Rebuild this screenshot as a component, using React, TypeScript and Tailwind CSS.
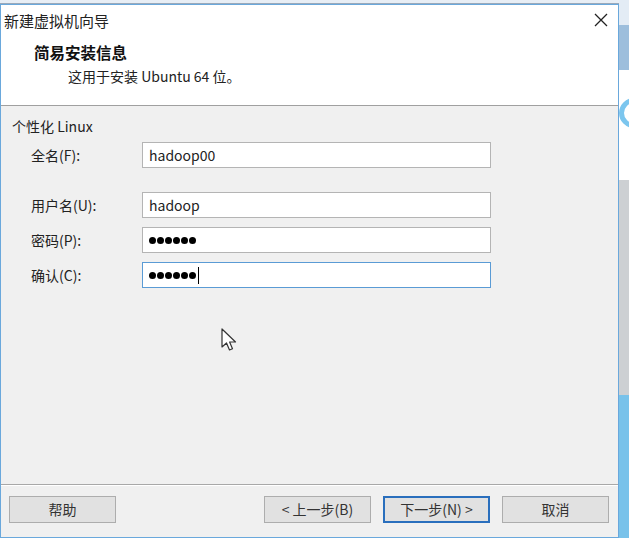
import React from "react";

const font = { fontFamily: '"Noto Sans CJK SC", "Noto Sans", sans-serif' };

function Field({ label, value, focused, password, mt }: { label: string; value: string; focused?: boolean; password?: boolean; mt: string }) {
  return (
    <div className={`flex items-center ${mt}`}>
      <div className="w-[130px] pl-[19px] text-[14px] text-[#222]">{label}</div>
      <div
        className={`w-[349px] h-[26px] bg-white flex items-center pl-[6px] border ${
          focused ? "border-[#5a9bd5]" : "border-[#b4b4b4]"
        }`}
      >
        {password ? (
          <span className="flex items-center gap-[1px]">
            {Array.from({ length: 6 }).map((_, i) => (
              <span key={i} className="w-[7px] h-[7px] rounded-full bg-black inline-block" />
            ))}
            {focused && <span className="w-px h-[17px] bg-black ml-[1px]" />}
          </span>
        ) : (
          <span className="text-[14px] text-[#222]">{value}</span>
        )}
      </div>
    </div>
  );
}

function Btn({ children, primary }: { children: React.ReactNode; primary?: boolean }) {
  return (
    <div
      className={`w-[107px] h-[27px] flex items-center justify-center text-[14px] text-[#333] bg-[#e1e1e1] ${
        primary ? "border-2 border-[#2a6fbd]" : "border border-[#adadad]"
      }`}
    >
      {children}
    </div>
  );
}

export default function App() {
  return (
    <div className="w-[629px] h-[538px] flex overflow-hidden bg-[#dfe9f3]" style={font}>
      <div className="w-[619px] flex flex-col">
        <div className="h-[4px] bg-[#e8eef5] border-b border-[#9aa9ba]" />
        <div className="relative flex-1 flex flex-col border border-[#6aa8dc] bg-white">
          <div className="h-[30px] flex items-center justify-between pl-[3px] pr-[10px]">
            <span className="text-[15px] text-[#222] leading-none">新建虚拟机向导</span>
            <svg width="14" height="14" viewBox="0 0 14 14">
              <path d="M1 1 L13 13 M13 1 L1 13" stroke="#222" strokeWidth="1.3" />
            </svg>
          </div>
          <div className="h-[70px] pt-[6px] pl-[33px]">
            <div className="text-[15.5px] font-bold text-[#111] leading-[22px]">简易安装信息</div>
            <div className="pl-[34px] text-[14px] text-[#222] leading-[22px] mt-[2px]">这用于安装 Ubuntu 64 位。</div>
          </div>
          <div className="h-px bg-[#a0a0a0]" />
          <div className="h-[378px] bg-[#f0f0f0] pt-[10px] pl-[11px] relative">
            <div className="text-[14px] text-[#222] leading-[20px]">个性化 Linux</div>
            <Field label="全名(F):" value="hadoop00" mt="mt-[6px]" />
            <Field label="用户名(U):" value="hadoop" mt="mt-[24px]" />
            <Field label="密码(P):" value="" password mt="mt-[9px]" />
            <Field label="确认(C):" value="" password focused mt="mt-[9px]" />
            <svg className="absolute left-[220px] top-[222px]" width="18" height="26" viewBox="0 0 18 26">
              <path d="M1 1 L1 19 L5.5 15 L8.5 22 L11.5 20.7 L8.6 14 L14.5 14 Z" fill="#fff" stroke="#333" strokeWidth="1.2" strokeLinejoin="round" />
            </svg>
          </div>
          <div className="h-px bg-[#a8a8a8]" />
          <div className="h-px bg-white" />
          <div className="flex-1 bg-[#f0f0f0] flex items-start pt-[10px] pl-[8px]">
            <Btn>帮助</Btn>
            <div className="ml-[148px] flex gap-[12px]">
              <Btn>&lt; 上一步(B)</Btn>
              <Btn primary>下一步(N) &gt;</Btn>
              <Btn>取消</Btn>
            </div>
          </div>
        </div>
      </div>
      <div className="flex-1 flex flex-col">
        <div className="h-[25px] bg-[#e3ecf5]" />
        <div className="h-[45px] bg-[#9dbedc]" />
        <div className="h-[110px] bg-white relative overflow-hidden">
          <div className="absolute left-[0px] top-[28px] w-[30px] h-[30px] rounded-full border-[5px] border-[#7cc6ee]" />
        </div>
        <div className="h-[215px] bg-[#cdd0d3]" />
        <div className="flex-1 bg-[#78c2ea]" />
      </div>
    </div>
  );
}
